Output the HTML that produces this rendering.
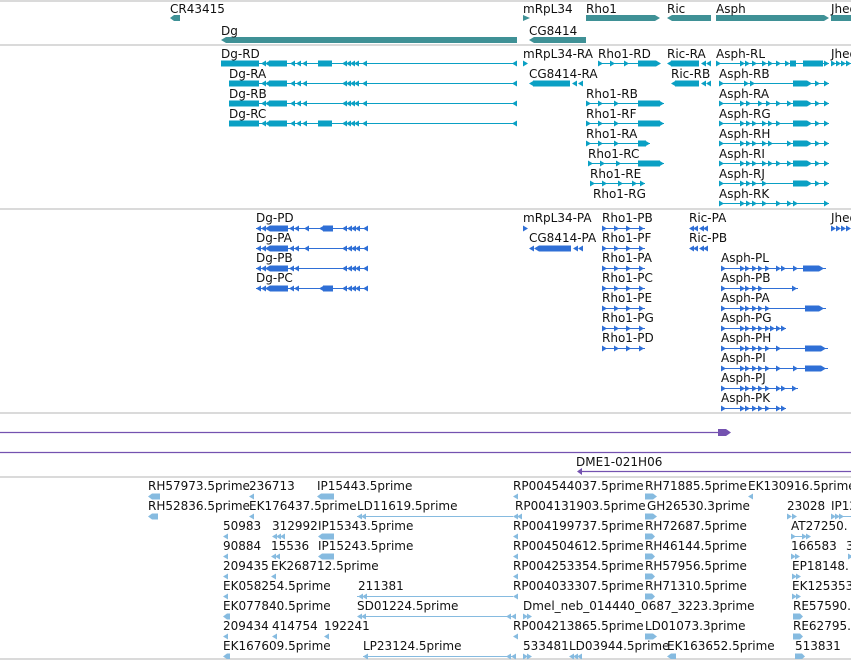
<!DOCTYPE html>
<html><head><meta charset="utf-8"><style>
html,body{margin:0;padding:0;background:#fff;width:851px;height:661px;overflow:hidden}
svg{display:block}
text{font-family:"DejaVu Sans","Liberation Sans",sans-serif;font-size:12px;fill:#111}
</style></head><body>
<svg width="851" height="661" viewBox="0 0 851 661" xmlns="http://www.w3.org/2000/svg">
<defs>
<polygon id="cl" points="0,0 5,-3 5,3"/>
<polygon id="cr" points="0,-3 5,0 0,3"/>
</defs>
<!-- separators -->
<g stroke="#c4c4c4" stroke-width="1.2">
<line x1="0" y1="1" x2="851" y2="1"/>
<line x1="0" y1="45" x2="851" y2="45"/>
<line x1="0" y1="209" x2="851" y2="209"/>
<line x1="0" y1="413" x2="851" y2="413"/>
<line x1="0" y1="477" x2="851" y2="477"/>
<line x1="0" y1="659" x2="851" y2="659"/>
</g>

<!-- gene track -->
<g fill="#3f9196">
<polygon points="170,18 174,15 180,15 180,21 174,21"/>
<polygon points="221,40 226,37 517,37 517,43 226,43"/>
<polygon points="523,15 530,18 523,21"/>
<polygon points="529,40 534,37 586,37 586,43 534,43"/>
<polygon points="586,15 655,15 660,18 655,21 586,21"/>
<polygon points="667,18 672,15 711,15 711,21 672,21"/>
<polygon points="716,15 824,15 829,18 824,21 716,21"/>
<rect x="831" y="15" width="20" height="6"/>
</g>
<text x="170" y="13">CR43415</text>
<text x="221" y="35">Dg</text>
<text x="523" y="13">mRpL34</text>
<text x="529" y="35">CG8414</text>
<text x="586" y="13">Rho1</text>
<text x="667" y="13">Ric</text>
<text x="716" y="13">Asph</text>
<text x="831" y="13">Jheq</text>

<!-- transcripts -->
<g fill="#0aa0c4" stroke="#0aa0c4">
<g stroke-width="1">
<line x1="221" y1="63.5" x2="517" y2="63.5"/>
<line x1="229" y1="83.5" x2="517" y2="83.5"/>
<line x1="229" y1="103.5" x2="517" y2="103.5"/>
<line x1="229" y1="123.5" x2="517" y2="123.5"/>
<line x1="598" y1="63.5" x2="660" y2="63.5"/>
<line x1="586" y1="103.5" x2="664" y2="103.5"/>
<line x1="586" y1="123.5" x2="664" y2="123.5"/>
<line x1="586" y1="143.5" x2="650" y2="143.5"/>
<line x1="588" y1="163.5" x2="664" y2="163.5"/>
<line x1="590" y1="183.5" x2="645" y2="183.5"/>
<line x1="716" y1="63.5" x2="829" y2="63.5"/>
<line x1="719" y1="83.5" x2="829" y2="83.5"/>
<line x1="719" y1="103.5" x2="829" y2="103.5"/>
<line x1="719" y1="123.5" x2="829" y2="123.5"/>
<line x1="719" y1="143.5" x2="829" y2="143.5"/>
<line x1="719" y1="163.5" x2="829" y2="163.5"/>
<line x1="719" y1="183.5" x2="829" y2="183.5"/>
<line x1="719" y1="203.5" x2="829" y2="203.5"/>
<line x1="831" y1="63.5" x2="851" y2="63.5"/>
</g>
<g stroke="none">
<!-- Dg rows -->
<g transform="translate(0,63.5)"><rect x="221" y="-3" width="38" height="6"/><use href="#cl" x="261"/><use href="#cl" x="265"/><rect x="269" y="-3" width="18" height="6"/><use href="#cl" x="290"/><use href="#cl" x="296"/><use href="#cl" x="302"/><rect x="318" y="-3" width="14" height="6"/><use href="#cl" x="342"/><use href="#cl" x="346"/><use href="#cl" x="350"/><use href="#cl" x="354"/><use href="#cl" x="362"/><use href="#cl" x="512"/></g>
<g transform="translate(8,83.5)"><rect x="221" y="-3" width="30" height="6"/><use href="#cl" x="253"/><use href="#cl" x="257"/><rect x="261" y="-3" width="18" height="6"/><use href="#cl" x="282"/><use href="#cl" x="288"/><use href="#cl" x="294"/><use href="#cl" x="334"/><use href="#cl" x="338"/><use href="#cl" x="342"/><use href="#cl" x="346"/><use href="#cl" x="354"/><use href="#cl" x="504"/></g>
<g transform="translate(8,103.5)"><rect x="221" y="-3" width="30" height="6"/><use href="#cl" x="253"/><use href="#cl" x="257"/><rect x="261" y="-3" width="18" height="6"/><use href="#cl" x="282"/><use href="#cl" x="288"/><use href="#cl" x="294"/><use href="#cl" x="334"/><use href="#cl" x="338"/><use href="#cl" x="342"/><use href="#cl" x="346"/><use href="#cl" x="354"/><use href="#cl" x="504"/></g>
<g transform="translate(8,123.5)"><rect x="221" y="-3" width="30" height="6"/><use href="#cl" x="253"/><use href="#cl" x="257"/><rect x="261" y="-3" width="18" height="6"/><use href="#cl" x="282"/><use href="#cl" x="288"/><use href="#cl" x="294"/><rect x="310" y="-3" width="14" height="6"/><use href="#cl" x="334"/><use href="#cl" x="338"/><use href="#cl" x="342"/><use href="#cl" x="346"/><use href="#cl" x="354"/><use href="#cl" x="504"/></g>
<use href="#cr" x="523" y="63.5"/>
<rect x="533" y="80.5" width="37" height="6"/><use href="#cl" x="529" y="83.5"/><use href="#cl" x="572" y="83.5"/><use href="#cl" x="578" y="83.5"/>
<!-- Rho1 -->
<g transform="translate(0,63.5)"><use href="#cr" x="598"/><use href="#cr" x="610"/><use href="#cr" x="624"/><rect x="638" y="-3" width="18" height="6"/><use href="#cr" x="656"/></g>
<g transform="translate(0,103.5)"><use href="#cr" x="586"/><use href="#cr" x="598"/><use href="#cr" x="614"/><rect x="638" y="-3" width="22" height="6"/><use href="#cr" x="659"/></g>
<g transform="translate(0,123.5)"><use href="#cr" x="586"/><use href="#cr" x="598"/><use href="#cr" x="614"/><rect x="638" y="-3" width="22" height="6"/><use href="#cr" x="659"/></g>
<g transform="translate(0,143.5)"><use href="#cr" x="586"/><use href="#cr" x="598"/><use href="#cr" x="614"/><rect x="638" y="-3" width="8" height="6"/><use href="#cr" x="645"/></g>
<g transform="translate(2,163.5)"><use href="#cr" x="586"/><use href="#cr" x="598"/><use href="#cr" x="614"/><rect x="636" y="-3" width="22" height="6"/><use href="#cr" x="657"/></g>
<g transform="translate(4,183.5)"><use href="#cr" x="586"/><use href="#cr" x="598"/><use href="#cr" x="614"/><use href="#cr" x="628"/><use href="#cr" x="636"/></g>
<!-- Ric -->
<g transform="translate(0,63.5)"><rect x="671" y="-3" width="28" height="6"/><use href="#cl" x="667"/><use href="#cl" x="701"/><use href="#cl" x="706"/></g>
<g transform="translate(0,83.5)"><rect x="675" y="-3" width="24" height="6"/><use href="#cl" x="671"/><use href="#cl" x="701"/><use href="#cl" x="706"/></g>
<!-- Asph -->
<g transform="translate(0,63.5)"><use href="#cr" x="716"/><use href="#cr" x="740"/><use href="#cr" x="745"/><use href="#cr" x="752"/><use href="#cr" x="762"/><use href="#cr" x="768"/><use href="#cr" x="776"/><use href="#cr" x="785"/><rect x="790" y="-3" width="6" height="6"/><rect x="803" y="-3" width="20" height="6"/><use href="#cr" x="824"/></g>
<g transform="translate(0,83.5)"><use href="#cr" x="719"/><use href="#cr" x="744"/><use href="#cr" x="750"/><rect x="793" y="-3" width="14" height="6"/><use href="#cr" x="807"/><use href="#cr" x="815"/><use href="#cr" x="824"/></g>
<g transform="translate(0,103.5)"><use href="#cr" x="719"/><use href="#cr" x="740"/><use href="#cr" x="746"/><use href="#cr" x="758"/><use href="#cr" x="766"/><use href="#cr" x="776"/><use href="#cr" x="787"/><rect x="793" y="-3" width="14" height="6"/><use href="#cr" x="807"/><use href="#cr" x="815"/><use href="#cr" x="824"/></g>
<g transform="translate(0,123.5)"><use href="#cr" x="719"/><use href="#cr" x="740"/><use href="#cr" x="746"/><use href="#cr" x="752"/><use href="#cr" x="762"/><use href="#cr" x="768"/><use href="#cr" x="776"/><rect x="793" y="-3" width="14" height="6"/><use href="#cr" x="807"/><use href="#cr" x="815"/><use href="#cr" x="824"/></g>
<g transform="translate(0,143.5)"><use href="#cr" x="719"/><use href="#cr" x="740"/><use href="#cr" x="746"/><use href="#cr" x="752"/><use href="#cr" x="762"/><use href="#cr" x="768"/><use href="#cr" x="787"/><rect x="793" y="-3" width="14" height="6"/><use href="#cr" x="807"/><use href="#cr" x="815"/><use href="#cr" x="824"/></g>
<g transform="translate(0,163.5)"><use href="#cr" x="719"/><use href="#cr" x="740"/><use href="#cr" x="746"/><use href="#cr" x="752"/><use href="#cr" x="762"/><use href="#cr" x="768"/><use href="#cr" x="776"/><use href="#cr" x="787"/><rect x="793" y="-3" width="14" height="6"/><use href="#cr" x="807"/><use href="#cr" x="815"/><use href="#cr" x="824"/></g>
<g transform="translate(0,183.5)"><use href="#cr" x="719"/><use href="#cr" x="740"/><use href="#cr" x="746"/><use href="#cr" x="752"/><use href="#cr" x="762"/><rect x="793" y="-3" width="14" height="6"/><use href="#cr" x="807"/><use href="#cr" x="815"/><use href="#cr" x="824"/></g>
<g transform="translate(0,203.5)"><use href="#cr" x="719"/><use href="#cr" x="740"/><use href="#cr" x="746"/><use href="#cr" x="752"/><use href="#cr" x="762"/><use href="#cr" x="776"/><use href="#cr" x="787"/><use href="#cr" x="793"/><use href="#cr" x="824"/></g>
<g transform="translate(0,63.5)"><use href="#cr" x="831"/><use href="#cr" x="836"/><use href="#cr" x="841"/><use href="#cr" x="846"/></g>
</g>
</g>
<text x="221" y="58">Dg-RD</text>
<text x="229" y="78">Dg-RA</text>
<text x="229" y="98">Dg-RB</text>
<text x="229" y="118">Dg-RC</text>
<text x="523" y="58">mRpL34-RA</text>
<text x="529" y="78">CG8414-RA</text>
<text x="598" y="58">Rho1-RD</text>
<text x="586" y="98">Rho1-RB</text>
<text x="586" y="118">Rho1-RF</text>
<text x="586" y="138">Rho1-RA</text>
<text x="588" y="158">Rho1-RC</text>
<text x="590" y="178">Rho1-RE</text>
<text x="593" y="198">Rho1-RG</text>
<text x="667" y="58">Ric-RA</text>
<text x="671" y="78">Ric-RB</text>
<text x="716" y="58">Asph-RL</text>
<text x="719" y="78">Asph-RB</text>
<text x="719" y="98">Asph-RA</text>
<text x="719" y="118">Asph-RG</text>
<text x="719" y="138">Asph-RH</text>
<text x="719" y="158">Asph-RI</text>
<text x="719" y="178">Asph-RJ</text>
<text x="719" y="198">Asph-RK</text>
<text x="831" y="58">Jheq</text>

<!-- proteins -->
<g fill="#2f6fd6" stroke="#2f6fd6">
<g stroke-width="1">
<line x1="256" y1="228.5" x2="368" y2="228.5"/>
<line x1="256" y1="248.5" x2="368" y2="248.5"/>
<line x1="256" y1="268.5" x2="368" y2="268.5"/>
<line x1="256" y1="288.5" x2="368" y2="288.5"/>
<line x1="602" y1="228.5" x2="645" y2="228.5"/>
<line x1="602" y1="248.5" x2="645" y2="248.5"/>
<line x1="602" y1="268.5" x2="645" y2="268.5"/>
<line x1="602" y1="288.5" x2="645" y2="288.5"/>
<line x1="602" y1="308.5" x2="645" y2="308.5"/>
<line x1="602" y1="328.5" x2="645" y2="328.5"/>
<line x1="602" y1="348.5" x2="645" y2="348.5"/>
<line x1="721" y1="268.5" x2="826" y2="268.5"/>
<line x1="721" y1="288.5" x2="798" y2="288.5"/>
<line x1="721" y1="308.5" x2="826" y2="308.5"/>
<line x1="721" y1="328.5" x2="786" y2="328.5"/>
<line x1="721" y1="348.5" x2="828" y2="348.5"/>
<line x1="721" y1="368.5" x2="828" y2="368.5"/>
<line x1="721" y1="388.5" x2="798" y2="388.5"/>
<line x1="721" y1="408.5" x2="786" y2="408.5"/>
</g>
<g stroke="none">
<g transform="translate(0,228.5)"><use href="#cl" x="256"/><use href="#cl" x="261"/><use href="#cl" x="265"/><rect x="270" y="-3" width="18" height="6"/><use href="#cl" x="289"/><use href="#cl" x="294"/><use href="#cl" x="304"/><rect x="323" y="-3" width="10" height="6"/><use href="#cl" x="319"/><use href="#cl" x="342"/><use href="#cl" x="347"/><use href="#cl" x="351"/><use href="#cl" x="355"/><use href="#cl" x="363"/></g>
<g transform="translate(0,248.5)"><use href="#cl" x="256"/><use href="#cl" x="261"/><use href="#cl" x="265"/><rect x="270" y="-3" width="18" height="6"/><use href="#cl" x="289"/><use href="#cl" x="294"/><use href="#cl" x="304"/><use href="#cl" x="342"/><use href="#cl" x="347"/><use href="#cl" x="351"/><use href="#cl" x="355"/><use href="#cl" x="363"/></g>
<g transform="translate(0,268.5)"><use href="#cl" x="256"/><use href="#cl" x="261"/><use href="#cl" x="265"/><rect x="270" y="-3" width="18" height="6"/><use href="#cl" x="289"/><use href="#cl" x="294"/><use href="#cl" x="342"/><use href="#cl" x="347"/><use href="#cl" x="351"/><use href="#cl" x="355"/><use href="#cl" x="363"/></g>
<g transform="translate(0,288.5)"><use href="#cl" x="256"/><use href="#cl" x="261"/><use href="#cl" x="265"/><rect x="270" y="-3" width="18" height="6"/><use href="#cl" x="289"/><use href="#cl" x="294"/><rect x="323" y="-3" width="10" height="6"/><use href="#cl" x="319"/><use href="#cl" x="342"/><use href="#cl" x="347"/><use href="#cl" x="351"/><use href="#cl" x="355"/><use href="#cl" x="363"/></g>
<use href="#cr" x="523" y="228.5"/>
<g transform="translate(0,248.5)"><use href="#cl" x="529"/><use href="#cl" x="534"/><rect x="539" y="-3" width="32" height="6"/><use href="#cl" x="573"/><use href="#cl" x="578"/></g>
<g transform="translate(0,228.5)"><use href="#cr" x="602"/><use href="#cr" x="614"/><use href="#cr" x="626"/><use href="#cr" x="639"/></g>
<g transform="translate(0,248.5)"><use href="#cr" x="602"/><use href="#cr" x="614"/><use href="#cr" x="626"/><use href="#cr" x="639"/></g>
<g transform="translate(0,268.5)"><use href="#cr" x="602"/><use href="#cr" x="614"/><use href="#cr" x="626"/><use href="#cr" x="639"/></g>
<g transform="translate(0,288.5)"><use href="#cr" x="602"/><use href="#cr" x="614"/><use href="#cr" x="626"/><use href="#cr" x="639"/></g>
<g transform="translate(0,308.5)"><use href="#cr" x="602"/><use href="#cr" x="614"/><use href="#cr" x="626"/><use href="#cr" x="639"/></g>
<g transform="translate(0,328.5)"><use href="#cr" x="602"/><use href="#cr" x="614"/><use href="#cr" x="626"/><use href="#cr" x="639"/></g>
<g transform="translate(0,348.5)"><use href="#cr" x="602"/><use href="#cr" x="614"/><use href="#cr" x="626"/><use href="#cr" x="639"/></g>
<g transform="translate(0,228.5)"><use href="#cl" x="689"/><use href="#cl" x="693"/><use href="#cl" x="699"/><use href="#cl" x="703"/></g>
<g transform="translate(0,248.5)"><use href="#cl" x="689"/><use href="#cl" x="693"/><use href="#cl" x="699"/><use href="#cl" x="703"/></g>
<g transform="translate(0,268.5)"><use href="#cr" x="721"/><use href="#cr" x="740"/><use href="#cr" x="745"/><use href="#cr" x="752"/><use href="#cr" x="758"/><use href="#cr" x="765"/><use href="#cr" x="776"/><use href="#cr" x="781"/><use href="#cr" x="793"/><rect x="803" y="-3" width="16" height="6"/><use href="#cr" x="819"/></g>
<g transform="translate(0,288.5)"><use href="#cr" x="721"/><use href="#cr" x="740"/><use href="#cr" x="745"/><use href="#cr" x="752"/><use href="#cr" x="758"/><use href="#cr" x="792"/></g>
<g transform="translate(0,308.5)"><use href="#cr" x="721"/><use href="#cr" x="740"/><use href="#cr" x="745"/><use href="#cr" x="752"/><use href="#cr" x="758"/><use href="#cr" x="765"/><rect x="805" y="-3" width="14" height="6"/><use href="#cr" x="819"/></g>
<g transform="translate(0,328.5)"><use href="#cr" x="721"/><use href="#cr" x="740"/><use href="#cr" x="745"/><use href="#cr" x="752"/><use href="#cr" x="758"/><use href="#cr" x="765"/><use href="#cr" x="770"/><use href="#cr" x="776"/><use href="#cr" x="781"/></g>
<g transform="translate(0,348.5)"><use href="#cr" x="721"/><use href="#cr" x="740"/><use href="#cr" x="745"/><use href="#cr" x="752"/><use href="#cr" x="758"/><use href="#cr" x="765"/><use href="#cr" x="776"/><rect x="805" y="-3" width="16" height="6"/><use href="#cr" x="821"/></g>
<g transform="translate(0,368.5)"><use href="#cr" x="721"/><use href="#cr" x="740"/><use href="#cr" x="745"/><use href="#cr" x="752"/><use href="#cr" x="758"/><use href="#cr" x="765"/><use href="#cr" x="776"/><use href="#cr" x="793"/><rect x="805" y="-3" width="16" height="6"/><use href="#cr" x="821"/></g>
<g transform="translate(0,388.5)"><use href="#cr" x="721"/><use href="#cr" x="740"/><use href="#cr" x="745"/><use href="#cr" x="752"/><use href="#cr" x="758"/><use href="#cr" x="765"/><use href="#cr" x="776"/><use href="#cr" x="781"/><use href="#cr" x="792"/></g>
<g transform="translate(0,408.5)"><use href="#cr" x="721"/><use href="#cr" x="740"/><use href="#cr" x="745"/><use href="#cr" x="752"/><use href="#cr" x="758"/><use href="#cr" x="765"/><use href="#cr" x="776"/><use href="#cr" x="781"/></g>
<g transform="translate(0,228.5)"><use href="#cr" x="831"/><use href="#cr" x="836"/><use href="#cr" x="841"/><use href="#cr" x="846"/></g>
</g>
</g>
<text x="256" y="222">Dg-PD</text>
<text x="256" y="242">Dg-PA</text>
<text x="256" y="262">Dg-PB</text>
<text x="256" y="282">Dg-PC</text>
<text x="523" y="222">mRpL34-PA</text>
<text x="529" y="242">CG8414-PA</text>
<text x="602" y="222">Rho1-PB</text>
<text x="602" y="242">Rho1-PF</text>
<text x="602" y="262">Rho1-PA</text>
<text x="602" y="282">Rho1-PC</text>
<text x="602" y="302">Rho1-PE</text>
<text x="602" y="322">Rho1-PG</text>
<text x="602" y="342">Rho1-PD</text>
<text x="689" y="222">Ric-PA</text>
<text x="689" y="242">Ric-PB</text>
<text x="721" y="262">Asph-PL</text>
<text x="721" y="282">Asph-PB</text>
<text x="721" y="302">Asph-PA</text>
<text x="721" y="322">Asph-PG</text>
<text x="721" y="342">Asph-PH</text>
<text x="721" y="362">Asph-PI</text>
<text x="721" y="382">Asph-PJ</text>
<text x="721" y="402">Asph-PK</text>
<text x="831" y="222">Jheq</text>

<!-- purple -->
<g fill="#7452b0" stroke="#7452b0">
<line x1="0" y1="432.5" x2="720" y2="432.5" stroke-width="1.3"/>
<polygon points="718,429 726,429 731,432.5 726,436 718,436" stroke="none"/>
<line x1="0" y1="452.5" x2="851" y2="452.5" stroke-width="1.3"/>
<line x1="578" y1="471.5" x2="851" y2="471.5" stroke-width="1.3"/>
<polygon points="577,471.5 582,468 582,475" stroke="none"/>
</g>
<text x="576" y="466">DME1-021H06</text>

<!-- ESTs -->
<g fill="#86bbe0" stroke="#86bbe0">
<g stroke-width="1">
<line x1="357" y1="516.5" x2="513" y2="516.5"/>
<line x1="357" y1="596.5" x2="513" y2="596.5"/>
<line x1="363" y1="616.5" x2="513" y2="616.5"/>
<line x1="363" y1="656.5" x2="513" y2="656.5"/>
<line x1="0" y1="596.5" x2="0" y2="596.5"/>
<line x1="831" y1="516.5" x2="851" y2="516.5"/>
<line x1="791" y1="536.5" x2="805" y2="536.5"/>
</g>
<g stroke="none">
<polygon points="148,496.5 152,493.5 160,493.5 160,499.5 152,499.5"/>
<use href="#cl" x="249" y="496.5"/>
<polygon points="317,496.5 321,493.5 334,493.5 334,499.5 321,499.5"/>
<use href="#cl" x="513" y="496.5"/>
<polygon points="645,493.5 653,493.5 657,496.5 653,499.5 645,499.5"/>
<use href="#cl" x="748" y="496.5"/>

<polygon points="148,516.5 152,513.5 158,513.5 158,519.5 152,519.5"/>
<use href="#cl" x="249" y="516.5"/>
<use href="#cl" x="357" y="516.5"/><use href="#cl" x="361" y="516.5"/>
<use href="#cl" x="513" y="516.5"/><use href="#cl" x="517" y="516.5"/>
<polygon points="645,513.5 653,513.5 657,516.5 653,519.5 645,519.5"/>
<use href="#cr" x="787" y="516.5"/><use href="#cr" x="792" y="516.5"/>
<use href="#cr" x="831" y="516.5"/><use href="#cr" x="835" y="516.5"/><use href="#cr" x="839" y="516.5"/>

<use href="#cl" x="223" y="536.5"/>
<use href="#cl" x="272" y="536.5"/><use href="#cl" x="276" y="536.5"/><use href="#cl" x="280" y="536.5"/>
<polygon points="318,536.5 322,533.5 334,533.5 334,539.5 322,539.5"/>
<use href="#cl" x="513" y="536.5"/>
<polygon points="645,533.5 652,533.5 655,536.5 652,539.5 645,539.5"/>
<use href="#cr" x="791" y="536.5"/><use href="#cr" x="802" y="536.5"/><use href="#cr" x="806" y="536.5"/>

<use href="#cl" x="223" y="556.5"/>
<use href="#cl" x="271" y="556.5"/><use href="#cl" x="275" y="556.5"/>
<polygon points="318,556.5 322,553.5 334,553.5 334,559.5 322,559.5"/>
<use href="#cl" x="513" y="556.5"/>
<polygon points="645,553.5 652,553.5 655,556.5 652,559.5 645,559.5"/>
<use href="#cr" x="791" y="556.5"/><use href="#cr" x="795" y="556.5"/>
<use href="#cr" x="848" y="556.5"/>

<use href="#cl" x="223" y="576.5"/>
<use href="#cl" x="271" y="576.5"/>
<use href="#cl" x="513" y="576.5"/>
<polygon points="645,573.5 652,573.5 655,576.5 652,579.5 645,579.5"/>
<use href="#cr" x="792" y="576.5"/><use href="#cr" x="796" y="576.5"/>

<use href="#cl" x="223" y="596.5"/>
<use href="#cl" x="358" y="596.5"/><use href="#cl" x="362" y="596.5"/>
<use href="#cl" x="513" y="596.5"/>
<polygon points="645,593.5 652,593.5 655,596.5 652,599.5 645,599.5"/>
<use href="#cr" x="792" y="596.5"/><use href="#cr" x="796" y="596.5"/>

<polygon points="223,616.5 227,613.5 230,613.5 230,619.5 227,619.5"/>
<use href="#cl" x="357" y="616.5"/><use href="#cl" x="361" y="616.5"/>
<use href="#cl" x="506" y="616.5"/><use href="#cl" x="511" y="616.5"/>
<use href="#cr" x="523" y="616.5"/><use href="#cr" x="527" y="616.5"/>
<polygon points="793,613.5 800,613.5 803,616.5 800,619.5 793,619.5"/>

<use href="#cl" x="223" y="636.5"/>
<use href="#cl" x="272" y="636.5"/>
<use href="#cl" x="324" y="636.5"/>
<use href="#cl" x="513" y="636.5"/>
<polygon points="645,633.5 653,633.5 657,636.5 653,639.5 645,639.5"/>
<polygon points="793,633.5 800,633.5 803,636.5 800,639.5 793,639.5"/>

<polygon points="223,656.5 227,653.5 230,653.5 230,659 227,659"/>
<use href="#cl" x="363" y="656.5"/><use href="#cl" x="506" y="656.5"/><use href="#cl" x="511" y="656.5"/>
<use href="#cr" x="523" y="656.5"/><use href="#cr" x="527" y="656.5"/>
<use href="#cl" x="569" y="656.5"/><use href="#cl" x="573" y="656.5"/><use href="#cl" x="577" y="656.5"/>
<polygon points="667,656.5 671,653.5 676,653.5 676,659 671,659"/>
<polygon points="795,653.5 802,653.5 805,656.5 802,659 795,659"/>
<polygon points="0,596.5 0,596.5"/>
</g>
</g>
<line x1="0" y1="596.5" x2="0" y2="596.5"/>
<g>
<text x="148" y="490">RH57973.5prime</text><text x="249" y="490">236713</text><text x="317" y="490">IP15443.5prime</text><text x="513" y="490">RP004544037.5prime</text><text x="645" y="490">RH71885.5prime</text><text x="748" y="490">EK130916.5prime</text>
<text x="148" y="510">RH52836.5prime</text><text x="249" y="510">EK176437.5prime</text><text x="357" y="510">LD11619.5prime</text><text x="515" y="510">RP004131903.5prime</text><text x="647" y="510">GH26530.3prime</text><text x="787" y="510">23028</text><text x="831" y="510">IP12</text>
<text x="223" y="530">50983</text><text x="272" y="530">312992</text><text x="318" y="530">IP15343.5prime</text><text x="513" y="530">RP004199737.5prime</text><text x="645" y="530">RH72687.5prime</text><text x="791" y="530">AT27250.</text>
<text x="223" y="550">90884</text><text x="271" y="550">15536</text><text x="318" y="550">IP15243.5prime</text><text x="513" y="550">RP004504612.5prime</text><text x="645" y="550">RH46144.5prime</text><text x="791" y="550">166583</text><text x="846" y="550">3</text>
<text x="223" y="570">209435</text><text x="271" y="570">EK268712.5prime</text><text x="513" y="570">RP004253354.5prime</text><text x="645" y="570">RH57956.5prime</text><text x="792" y="570">EP18148.</text>
<text x="223" y="590">EK058254.5prime</text><text x="358" y="590">211381</text><text x="513" y="590">RP004033307.5prime</text><text x="645" y="590">RH71310.5prime</text><text x="792" y="590">EK125353</text>
<text x="223" y="610">EK077840.5prime</text><text x="357" y="610">SD01224.5prime</text><text x="523" y="610">Dmel_neb_014440_0687_3223.3prime</text><text x="793" y="610">RE57590.</text>
<text x="223" y="630">209434</text><text x="272" y="630">414754</text><text x="324" y="630">192241</text><text x="513" y="630">RP004213865.5prime</text><text x="645" y="630">LD01073.3prime</text><text x="793" y="630">RE62795.</text>
<text x="223" y="650">EK167609.5prime</text><text x="363" y="650">LP23124.5prime</text><text x="523" y="650">533481</text><text x="569" y="650">LD03944.5prime</text><text x="667" y="650">EK163652.5prime</text><text x="795" y="650">513831</text>
</g>
</svg>
</body></html>
